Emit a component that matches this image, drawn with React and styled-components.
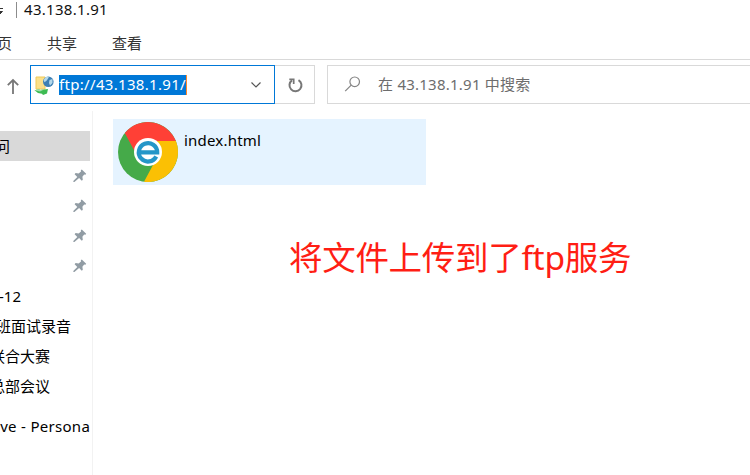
import React from "react";
import styled, { createGlobalStyle } from "styled-components";

const GlobalStyle = createGlobalStyle`
  * { box-sizing: border-box; }
  body {
    margin: 0;
    background: #fff;
    color: #111;
    font: 15px/20px "Noto Sans", "Noto Sans CJK SC", sans-serif;
    overflow: hidden;
  }
  svg { display: block; flex: none; }
`;

const Window = styled.div`
  width: 750px;
  height: 475px;
  display: flex;
  flex-direction: column;
  overflow: hidden;
`;

const Label = styled.span`
  flex: none;
  white-space: pre;
  letter-spacing: ${(p) => p.$track || 0}px;
  margin-left: ${(p) => p.$shift || 0}px;
`;

const TitleBar = styled.header`
  height: 22px;
  display: flex;
  align-items: flex-start;
  line-height: 18px;
`;

const Divider = styled.i`
  width: 1px;
  height: 16px;
  margin: 2px 7px 0 12px;
  background: #8c8c8c;
`;

const TabBar = styled.nav`
  height: 38px;
  padding-top: 11px;
  display: flex;
  gap: 35px;
  color: #333;
  border-bottom: 1px solid #d9d9d9;
`;

const Toolbar = styled.div`
  height: 51px;
  padding: 5px 0 0 6px;
  display: flex;
`;

const UpButton = styled.div`
  width: 24px;
  height: 39px;
  padding-top: 13px;
`;

const AddressBox = styled.div`
  width: 245px;
  height: 39px;
  display: flex;
  align-items: center;
  padding: 0 13px 0 3px;
  border: 1px solid #0078d7;
`;

const Selection = styled.span`
  height: 20px;
  width: 128px;
  margin: 0 auto 0 5px;
  line-height: 18px;
  white-space: nowrap;
  color: #fff;
  background: #0078d7;
  border-right: 1px solid #ff8728;
  letter-spacing: ${(p) => p.$track}px;
`;

const RefreshButton = styled.div`
  width: 40px;
  height: 39px;
  padding: 11px 0 0 13px;
  border: 1px solid #d9d9d9;
  border-left: 0;
`;

const SearchBox = styled.div`
  flex: 1;
  height: 39px;
  margin-left: 12px;
  padding: 0 0 2px 16px;
  display: flex;
  align-items: center;
  gap: 17px;
  color: #6d6d6d;
  border: 1px solid #d9d9d9;
  border-right: 0;
`;

const Body = styled.div`
  flex: 1;
  display: flex;
`;

const Sidebar = styled.aside`
  width: 93px;
  padding: 20px 2px 0 0;
  border-right: 1px solid #f2f2f2;
`;

const Row = styled.div`
  height: 30px;
  width: 90px;
  margin-top: ${(p) => p.$gap || 0}px;
  display: flex;
  align-items: center;
  overflow: hidden;
  color: #000;
  background: ${(p) => (p.$selected ? "#d9d9d9" : "transparent")};
`;

const PinSlot = styled.span`
  margin-left: 73px;
`;

const Content = styled.main`
  flex: 1;
  padding: 8px 0 0 20px;
`;

const FileTile = styled.div`
  width: 313px;
  height: 66px;
  padding: 3px 5px;
  display: flex;
  gap: 6px;
  background: #e5f3ff;
`;

const FileName = styled.span`
  margin-top: 8px;
  color: #000;
  letter-spacing: ${(p) => p.$track}px;
`;

const Note = styled.p`
  margin: 47px 0 0 176px;
  font-size: 33.5px;
  line-height: 50px;
  letter-spacing: ${(p) => p.$track}px;
  color: #ff1e14;
  white-space: nowrap;
`;

const UpArrow = () => (
  <svg width="14" height="17" viewBox="0 0 14 17" fill="none" stroke="#777" strokeWidth="1.8">
    <path d="M7 16V2M1.8 7.2 7 2l5.2 5.2" />
  </svg>
);

const FtpIcon = () => (
  <svg width="20" height="22" viewBox="0 0 20 22">
    <path d="M2 3h9v12H2z" fill="#fbe08a" stroke="#efc95a" />
    <circle cx="14.3" cy="7.7" r="5.3" fill="#3c7fb4" />
    <path d="M9.6 6c1.500-3.500 4.400-4 5.400-3.200l-1 2-1.500 2-2 1.500zM15.500 6l3-1v4l-2.500 2.500-1-2.500z" fill="#b4d8ea" />
    <path d="M.5 16.200 5 15.200l1 .8 8-.9-1 4.400-4 1.500-1-1.300-4-.7z" fill="#3dbb52" />
    <path d="m.5 16.200 4.500-1 1 .8 4-.4-4 2z" fill="#a2dfaa" />
  </svg>
);

const Chevron = () => (
  <svg width="10" height="6" viewBox="0 0 10 6" fill="none" stroke="#555" strokeWidth="1.2">
    <path d="m.5.5 4.5 4.5L9.5.5" />
  </svg>
);

const RefreshIcon = () => (
  <svg width="15" height="16" viewBox="0 0 15 16" fill="none" stroke="#777" strokeWidth="2">
    <path d="M10.500 3.100A6 6 0 1 1 4 3.400" />
    <path d="M1.300 2.300h4.400v4.700" strokeWidth="1.700" />
  </svg>
);

const SearchIcon = () => (
  <svg width="17" height="16" viewBox="0 0 17 16" fill="none" stroke="#858585" strokeWidth="1.2">
    <circle cx="10.7" cy="5.8" r="4.8" />
    <path d="m7.2 9.2-6 6" />
  </svg>
);

const PinIcon = () => (
  <svg width="14" height="14" viewBox="0 0 14 14" fill="#919ca4">
    <path d="M8.8.5 13.200 4.800l-.8 1-1.200-.2-1.800 2.200.4 2.900-1 1.100-2.700-2.800L1.400 13 .3 12.900l.2-1.100L4.300 7.900 1.600 5.200l1-1.100 3 .3L8 2.500l-.2-1.200z" />
  </svg>
);

const BrowserLogo = () => (
  <svg width="60" height="60" viewBox="0 0 60 60">
    <circle cx="30" cy="30" r="30" fill="#45aa49" />
    <path d="M6.800 11A30 30 0 0 1 57.800 19H30L17 30z" fill="#ff4036" />
    <path d="M30 19h27.900A30 30 0 0 1 26 59.700L35 43z" fill="#fbc004" />
    <circle cx="30" cy="30" r="14" fill="#fff" />
    <path d="M38.200 34.500A9.200 9.200 0 1 1 39.200 30.400H22" fill="none" stroke="#2596c8" strokeWidth="4.200" />
  </svg>
);

const folders = [
  { text: "-12", shift: -1 },
  { text: "班面试录音", shift: -4 },
  { text: "联合大赛", shift: -10 },
  { text: "总部会议", shift: -10 },
];

export default function App() {
  return (
    <Window>
      <GlobalStyle />
      <TitleBar>
        <svg width="4" height="20" viewBox="0 0 4 20">
          <path d="M0 8.500h3M0 11.500h2.500L0 14z" fill="#333" stroke="#333" />
        </svg>
        <Divider />
        <Label $track={0.3}>43.138.1.91</Label>
      </TitleBar>
      <TabBar>
        <Label $shift={-18}>主页</Label>
        <Label>共享</Label>
        <Label>查看</Label>
      </TabBar>
      <Toolbar>
        <UpButton><UpArrow /></UpButton>
        <AddressBox>
          <FtpIcon />
          <Selection $track={0.32}>ftp://43.138.1.91/</Selection>
          <Chevron />
        </AddressBox>
        <RefreshButton><RefreshIcon /></RefreshButton>
        <SearchBox>
          <SearchIcon />
          <Label $track={0.24}>在 43.138.1.91 中搜索</Label>
        </SearchBox>
      </Toolbar>
      <Body>
        <Sidebar>
          <Row $selected><Label $shift={-50}>快速访问</Label></Row>
          {[0, 1, 2, 3].map((n) => (
            <Row key={n}><PinSlot><PinIcon /></PinSlot></Row>
          ))}
          {folders.map((f) => (
            <Row key={f.text}><Label $shift={f.shift}>{f.text}</Label></Row>
          ))}
          <Row $gap={10}><Label $shift={-4} $track={0.3}>ive - Persona</Label></Row>
        </Sidebar>
        <Content>
          <FileTile>
            <BrowserLogo />
            <FileName $track={0.2}>index.html</FileName>
          </FileTile>
          <Note $track={-0.3}>将文件上传到了ftp服务</Note>
        </Content>
      </Body>
    </Window>
  );
}
